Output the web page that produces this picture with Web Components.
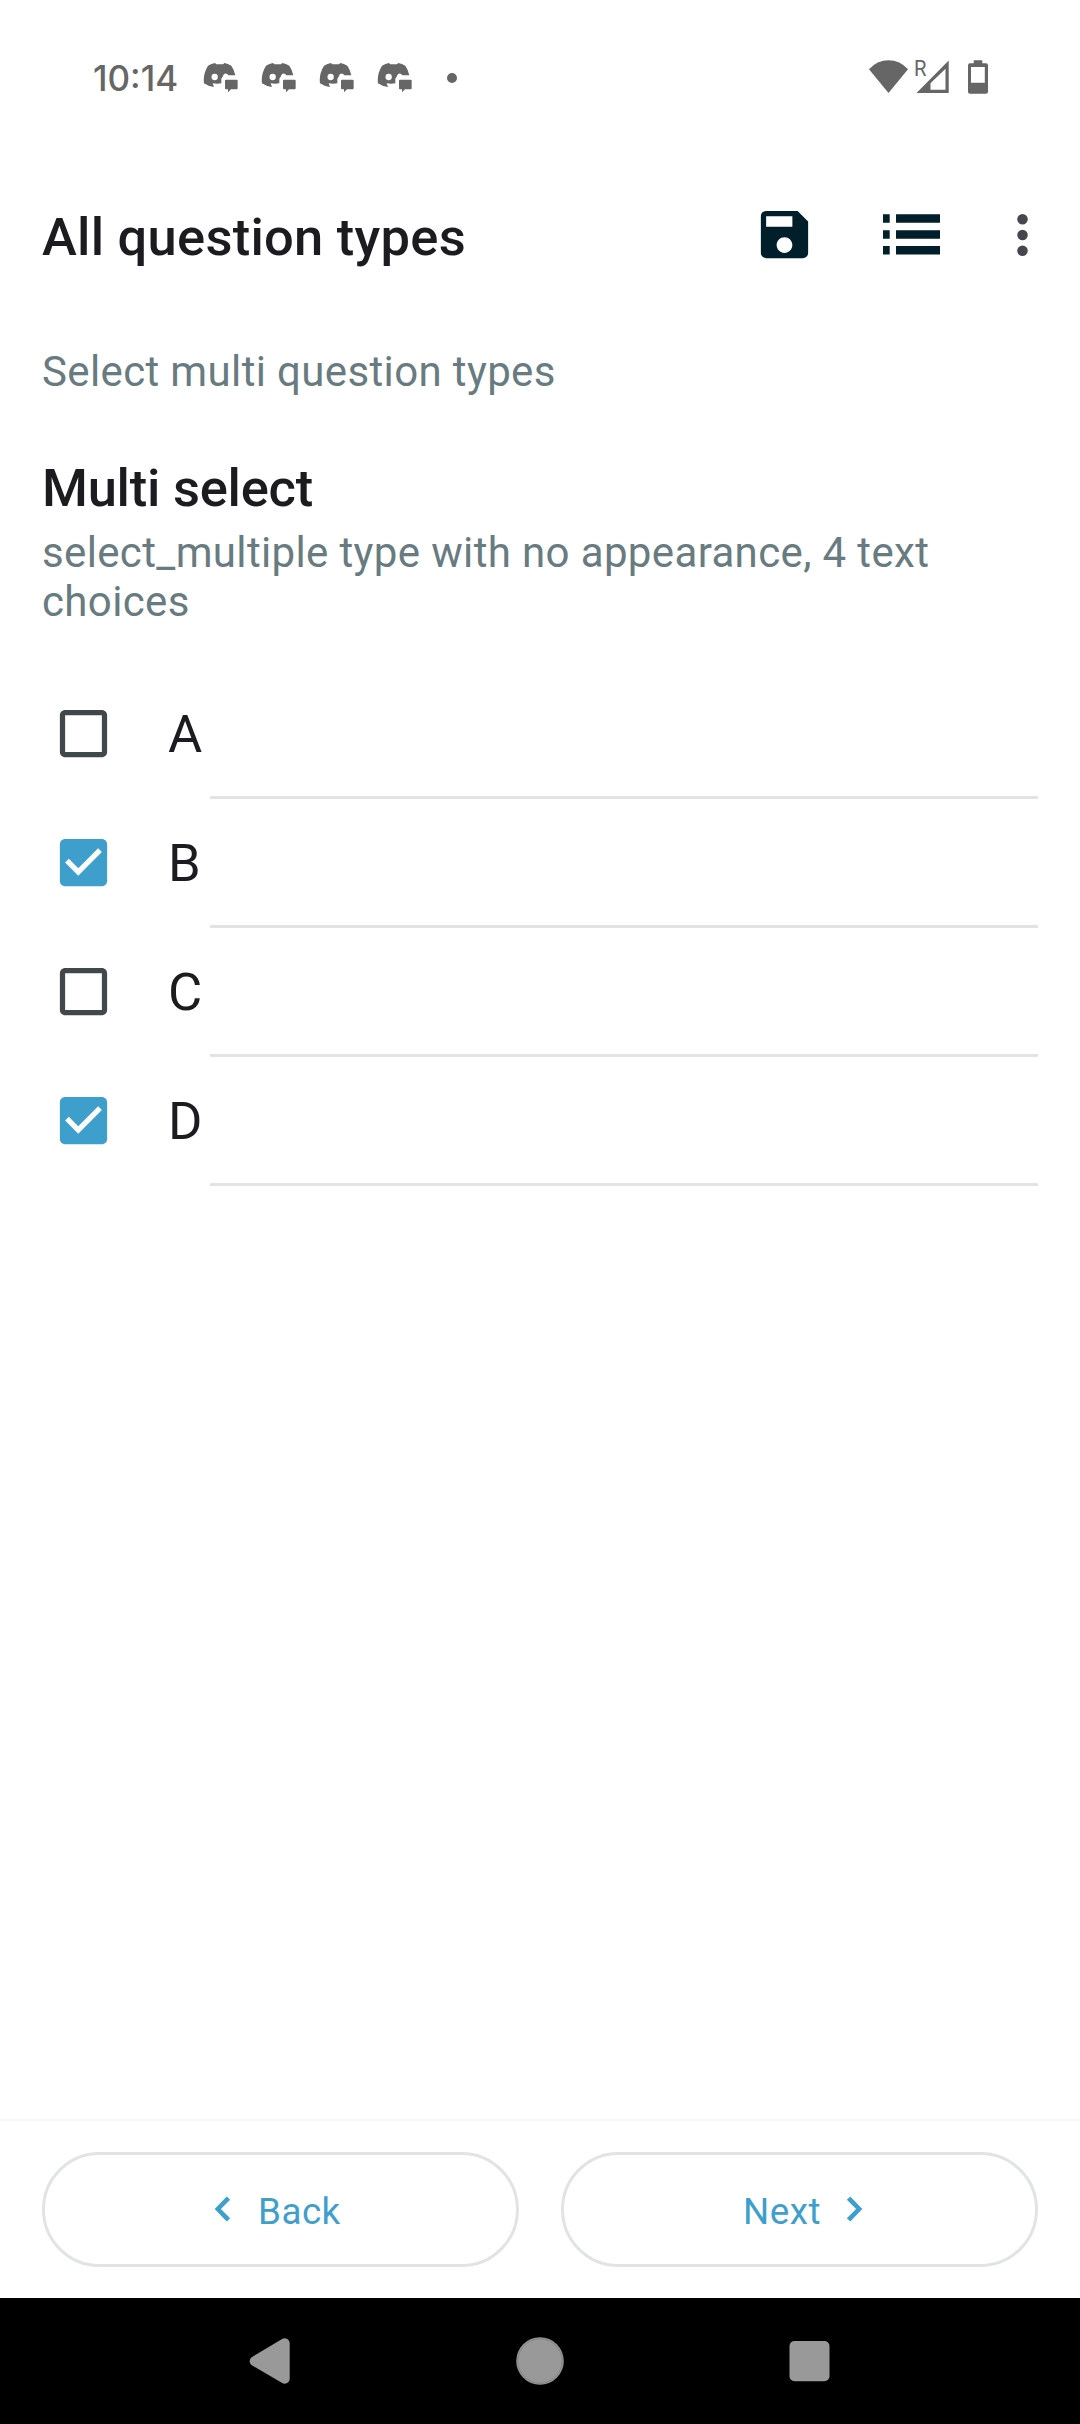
<!DOCTYPE html>
<html lang="en">
<head>
<meta charset="utf-8">
<title>All question types</title>
<style>
  html, body { margin: 0; padding: 0; background: #fff; }
  body { font-family: Roboto, "Liberation Sans", sans-serif; color: #1c1b1f; }
</style>
</head>
<body>
<form-screen></form-screen>

<script>
const define = (name, render) => customElements.define(name, class extends HTMLElement {
  connectedCallback() {
    if (this.shadowRoot) return;
    this.attachShadow({ mode: 'open' }).innerHTML = render(this);
  }
});

define('chat-notification', () => `
  <style>:host { display: block; width: 36px; height: 32px; } svg { display: block; }</style>
  <svg width="36" height="32" viewBox="39 43 108 96" fill="#666">
    <path d="M54 54Q64 48 75 46L79 50H99L103 46Q114 48 124 54Q133 67 136 83H115Q112 77 104 78Q100 80 98 87L94 93V107Q82 109 68 107L72 118Q56 117 42 107Q38 80 54 54Z"/>
    <circle cx="74" cy="88" r="9.5" fill="#fff"/>
    <path d="M108 96H140Q143 96 143 99V122Q143 125 140 125H123L114 134V125H108Q105 125 105 122V99Q105 96 108 96Z"/>
  </svg>`);

define('system-status', () => `
  <style>
    :host { display: flex; align-items: center; box-sizing: border-box; height: 156px; padding: 0 92px 0 93px; }
    .time { font: 500 35px/42px Inter, sans-serif; color: #666; width: 110px; }
    .notes { display: flex; gap: 22px; }
    .more { width: 10px; height: 10px; border-radius: 50%; background: #666; margin-left: 34px; }
    .system { display: flex; align-items: center; margin-left: auto; }
    svg { display: block; }
    .signal { margin-left: 3px; }
    .battery { margin-left: 19px; }
    text { font: 400 22.5px Roboto, sans-serif; }
  </style>
  <div class="time">10:14</div>
  <div class="notes">
    <chat-notification></chat-notification><chat-notification></chat-notification><chat-notification></chat-notification><chat-notification></chat-notification>
  </div>
  <div class="more"></div>
  <div class="system">
    <svg width="39" height="36" viewBox="0 0 39 36" fill="#666"><path d="M0 9.2Q8 .2 19.5 .2T39 9.2L19.5 33Z"/></svg>
    <svg class="signal" width="38" height="60" viewBox="-4 -12 38 60" fill="#666">
      <text x="-1" y="16" textLength="12.5" lengthAdjust="spacingAndGlyphs">R</text>
      <path fill-rule="evenodd" d="M33.7 .5V33H1.5ZM30.5 8.7L15.5 23.2V29.7H30.5Z"/>
    </svg>
    <svg class="battery" width="20" height="36" viewBox="0 0 20 36" fill="#666">
      <path fill-rule="evenodd" d="M5.7 .3H14.3V3.3H18Q20 3.3 20 5.3V31.7Q20 33.7 18 33.7H2Q0 33.7 0 31.7V5.3Q0 3.3 2 3.3H5.7ZM3 7V22.7H16.8V7Z"/>
    </svg>
  </div>`);

define('app-toolbar', () => `
  <style>
    :host { display: flex; align-items: center; box-sizing: border-box; height: 147px; margin-top: 5px; padding: 0 52px 0 42px; }
    h1 { margin: 0; padding-top: 4px; font-size: 52.5px; line-height: 62px; font-weight: 500; letter-spacing: .25px; white-space: nowrap; }
    svg { display: block; flex: none; }
    .save { margin-left: auto; }
    .list { margin-left: 67px; }
    .more { margin-left: 77px; }
  </style>
  <h1><slot></slot></h1>
  <svg class="save" width="63" height="63" viewBox="0 0 24 24" fill="#001f2a"><path d="M17 3L5 3c-1.11 0-2 .9-2 2v14c0 1.1.89 2 2 2h14c1.1 0 2-.9 2-2L21 7l-4-4zM12 19c-1.66 0-3-1.34-3-3s1.34-3 3-3 3 1.34 3 3-1.34 3-3 3zM15 9L5 9L5 5h10v4z"/></svg>
  <svg class="list" width="57" height="41" viewBox="0 0 57 41" fill="#001f2a"><path d="M0 .3H6.7V8.8H0ZM13 .3H57V8.8H13ZM0 16.2H6.7V24.7H0ZM13 16.2H57V24.7H13ZM0 32H6.7V40.5H0ZM13 32H57V40.5H13Z"/></svg>
  <svg class="more" width="11" height="43" viewBox="0 0 11 43" fill="#49454f"><circle cx="5.5" cy="6.3" r="5.25"/><circle cx="5.5" cy="22" r="5.25"/><circle cx="5.5" cy="37.7" r="5.25"/></svg>`);

define('question-header', () => `
  <style>
    :host { display: block; padding: 39px 42px 0; }
    p, h2 { margin: 0; }
    p { font-size: 42px; line-height: 49px; letter-spacing: .36px; color: #677b80; }
    h2 { margin: 61px 0 9px; font-size: 52.5px; line-height: 62px; font-weight: 500; letter-spacing: -.25px; }
  </style>
  <p><slot name="group"></slot></p>
  <h2><slot name="label"></slot></h2>
  <p><slot name="hint"></slot></p>`);

define('choice-row', el => `
  <style>
    :host { display: block; }
    .row { display: flex; align-items: center; height: 126px; padding-left: 52.5px; }
    svg { display: block; margin-left: -.5px; }
    span { margin-left: 53px; padding-top: 2px; font-size: 52.5px; line-height: 62px; }
    .divider { height: 3px; margin: 0 42px 0 210px; background: #e0e4e4; }
  </style>
  <div class="row">
    <svg width="63" height="63" viewBox="0 0 24 24">${el.hasAttribute('checked')
      ? '<path fill="#3e9fcc" d="M19 3H5c-1.11 0-2 .9-2 2v14c0 1.1.89 2 2 2h14c1.11 0 2-.9 2-2V5c0-1.1-.89-2-2-2zM10 17l-5-5 1.41-1.41L10 14.17l7.59-7.59L19 8l-9 9z"/>'
      : '<path fill="#40484b" d="M19 5v14H5V5h14m0-2H5c-1.1 0-2 .9-2 2v14c0 1.1.9 2 2 2h14c1.1 0 2-.9 2-2V5c0-1.1-.9-2-2-2z"/>'}</svg>
    <span><slot></slot></span>
  </div>
  <div class="divider"></div>`);

define('choice-list', () => `
  <style>:host { display: block; margin-top: 44px; flex: 1; }</style>
  <slot></slot>`);

define('nav-button', el => {
  const next = el.getAttribute('direction') === 'next';
  const icon = next
    ? '<svg width="50" height="50" viewBox="0 0 24 24"><path d="M10.2 6L8.59 7.6 13 12 8.59 16.4 10.2 18 16 12z"/></svg>'
    : '<svg width="50" height="50" viewBox="0 0 24 24"><path d="M15.41 7.6L13.8 6 8 12l5.8 6 1.61-1.6L11 12z"/></svg>';
  const label = '<span><slot></slot></span>';
  return `
  <style>
    :host { display: flex; align-items: center; box-sizing: border-box; flex: none; width: 477px; height: 115px; border: 3px solid #e0e4e4; border-radius: 58px; color: #3e9fcc;
      gap: ${next ? 8.5 : 10.5}px; padding-left: ${next ? 179 : 152.5}px; }
    svg { display: block; fill: currentColor; margin-top: -1px; }
    span { padding-top: 4px; font-size: 36.75px; line-height: 44px; letter-spacing: .5px; }
  </style>
  ${next ? label + icon : icon + label}`;
});

define('form-footer', () => `
  <style>:host { display: flex; gap: 42px; padding: 31px 42px; border-top: 2px solid #f6f6f6; }</style>
  <slot></slot>`);

define('system-navigation', () => `
  <style>
    :host { display: grid; grid-template-columns: repeat(3, 270px); place-items: center; justify-content: center; height: 126px; background: #000; }
    svg { display: block; }
  </style>
  <svg width="50" height="50" viewBox="0 0 50 50" fill="#999" stroke="#999" stroke-width="10" stroke-linejoin="round"><path d="M9.7 25.2L39.7 7.3V42.7Z"/></svg>
  <svg width="50" height="50" viewBox="0 0 50 50"><circle cx="25" cy="25" r="23.8" fill="#999"/><circle cx="25" cy="25" r="22.3" fill="none" stroke="#777" stroke-width=".7"/></svg>
  <svg width="50" height="50" viewBox="0 0 50 50" fill="#999"><rect x="4.5" y="5" width="40" height="40.3" rx="5"/></svg>`);

define('form-screen', () => `
  <style>:host { display: flex; flex-direction: column; width: 1080px; height: 2424px; overflow: hidden; background: #fff; }</style>
  <system-status></system-status>
  <app-toolbar>All question types</app-toolbar>
  <question-header>
    <span slot="group">Select multi question types</span>
    <span slot="label">Multi select</span>
    <span slot="hint">select_multiple type with no appearance, 4 text choices</span>
  </question-header>
  <choice-list>
    <choice-row>A</choice-row>
    <choice-row checked>B</choice-row>
    <choice-row>C</choice-row>
    <choice-row checked>D</choice-row>
  </choice-list>
  <form-footer>
    <nav-button direction="back">Back</nav-button>
    <nav-button direction="next">Next</nav-button>
  </form-footer>
  <system-navigation></system-navigation>`);
</script>
</body>
</html>
